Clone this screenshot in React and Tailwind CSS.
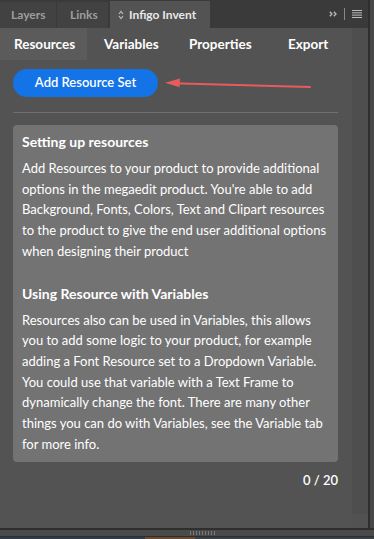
import React from 'react';

const sections = [
  {
    title: 'Setting up resources',
    lines: [
      'Add Resources to your product to provide additional',
      "options in the megaedit product. You're able to add",
      'Background, Fonts, Colors, Text and Clipart resources',
      'to the product to give the end user additional options',
      'when designing their product',
    ],
  },
  {
    title: 'Using Resource with Variables',
    lines: [
      'Resources also can be used in Variables, this allows',
      'you to add some logic to your product, for example',
      'adding a Font Resource set to a Dropdown Variable.',
      'You could use that variable with a Text Frame to',
      'dynamically change the font. There are many other',
      'things you can do with Variables, see the Variable tab',
      'for more info.',
    ],
  },
];

export default function App() {
  return (
    <div className="w-[374px] h-[539px] flex flex-col bg-[#3a3a3a] overflow-hidden font-[Lato,sans-serif]">
      <div className="flex flex-1 min-h-0">
        <div className="w-[368px] flex flex-col">
          {/* panel tabs */}
          <div className="h-[28px] bg-[#3a3a3a] flex items-end text-[12px] font-bold">
            <div className="w-[56px] h-[26px] bg-[#424242] text-[#9d9d9d] flex items-center pl-[11px]">Layers</div>
            <div className="w-[51px] h-[26px] ml-px bg-[#424242] text-[#9d9d9d] flex items-center pl-[13px]">Links</div>
            <div className="w-[100px] h-[27px] ml-[2px] bg-[#535353] text-[#e8e8e8] flex items-center pl-[8px] gap-[5px]">
              <svg width="6" height="10" viewBox="0 0 6 10" fill="none" stroke="#bdbdbd" strokeWidth="1.2">
                <path d="M1 4 L3 1.5 L5 4" />
                <path d="M1 6 L3 8.5 L5 6" />
              </svg>
              <span>Infigo Invent</span>
            </div>
            <div className="flex-1 h-[28px] flex items-center justify-end pr-[6px] gap-[7px]">
              <svg width="8" height="6" viewBox="0 0 8 6" fill="none" stroke="#bdbdbd" strokeWidth="1.3">
                <path d="M0.8 0.8 L3 3 L0.8 5.2" />
                <path d="M4.8 0.8 L7 3 L4.8 5.2" />
              </svg>
              <span className="w-px h-[12px] bg-[#8a8a8a]" />
              <svg width="10" height="8" viewBox="0 0 10 8" fill="#bdbdbd">
                <rect y="0" width="10" height="1" />
                <rect y="2.3" width="10" height="1" />
                <rect y="4.6" width="10" height="1" />
                <rect y="7" width="10" height="1" />
              </svg>
            </div>
          </div>

          <div className="flex flex-1 min-h-0">
            <div className="w-[352px] bg-[#535353] flex flex-col relative">
              {/* nav */}
              <div className="h-[32px] flex items-center text-[13.5px] font-bold text-white">
                <div className="w-[87px] h-full bg-[#5b5b5b] flex items-center pl-[14px]">Resources</div>
                <div className="pl-[17px] w-[102px]">Variables</div>
                <div className="w-[99px]">Properties</div>
                <div>Export</div>
              </div>

              <div className="px-[13px] pt-[9px] flex flex-col">
                <button className="w-[145px] h-[28px] rounded-full bg-[#1473e6] text-white text-[13px] font-semibold">
                  Add Resource Set
                </button>
                <div className="h-px bg-[#6f6f6f] mt-[15px] w-[325px]" />

                <div className="mt-[12px] w-[325px] bg-[#737373] rounded-[4px] pl-[9px] pr-[4px] pt-[5px] pb-[8px] text-white text-[13px] leading-[20.7px]">
                  {sections.map((s, i) => (
                    <div key={s.title} className={i > 0 ? 'mt-[20px]' : ''}>
                      <div className="font-bold text-[14px] leading-[24px] mb-[4px]">{s.title}</div>
                      {s.lines.map((l) => (
                        <div key={l} className="whitespace-nowrap">{l}</div>
                      ))}
                    </div>
                  ))}
                </div>

                <div className="w-[325px] text-right text-white text-[13px] font-semibold mt-[9px]">0 / 20</div>
              </div>

              {/* annotation arrow */}
              <svg className="absolute left-0 top-0 pointer-events-none" width="352" height="90">
                <line x1="172" y1="55.2" x2="310" y2="59" stroke="#ea5a5c" strokeWidth="2" strokeLinecap="round" />
                <path d="M165 54.8 L180 50.6 L179.6 59.2 Z" fill="#ea5a5c" />
              </svg>
            </div>
            <div className="flex-1 bg-[#4e4e4e] flex flex-col justify-end">
              <div className="h-[14px] bg-[#525252]" />
            </div>
          </div>
        </div>
        <div className="w-[2px] bg-[#2e2e2e]" />
        <div className="flex-1 bg-[#474747]" />
      </div>

      {/* bottom resize strip */}
      <div className="h-[2px] bg-[#2e2e2e]" />
      <div className="h-[6px] bg-[#4a4a4a] flex justify-center items-center pl-[30px]">
        <div className="flex gap-[2px]">
          {Array.from({ length: 9 }).map((_, i) => (
            <span key={i} className="w-px h-[4px] bg-[#7a7a7a]" />
          ))}
        </div>
      </div>
      <div className="h-px bg-[#2e2e2e]" />
      <div className="h-[2px] bg-[#3b3f4a] flex">
        <div className="w-[145px] bg-[#2f3b4c]" />
        <div className="w-[50px] bg-[#6a4a32]" />
        <div className="flex-1 bg-[#3a4048]" />
      </div>
    </div>
  );
}
